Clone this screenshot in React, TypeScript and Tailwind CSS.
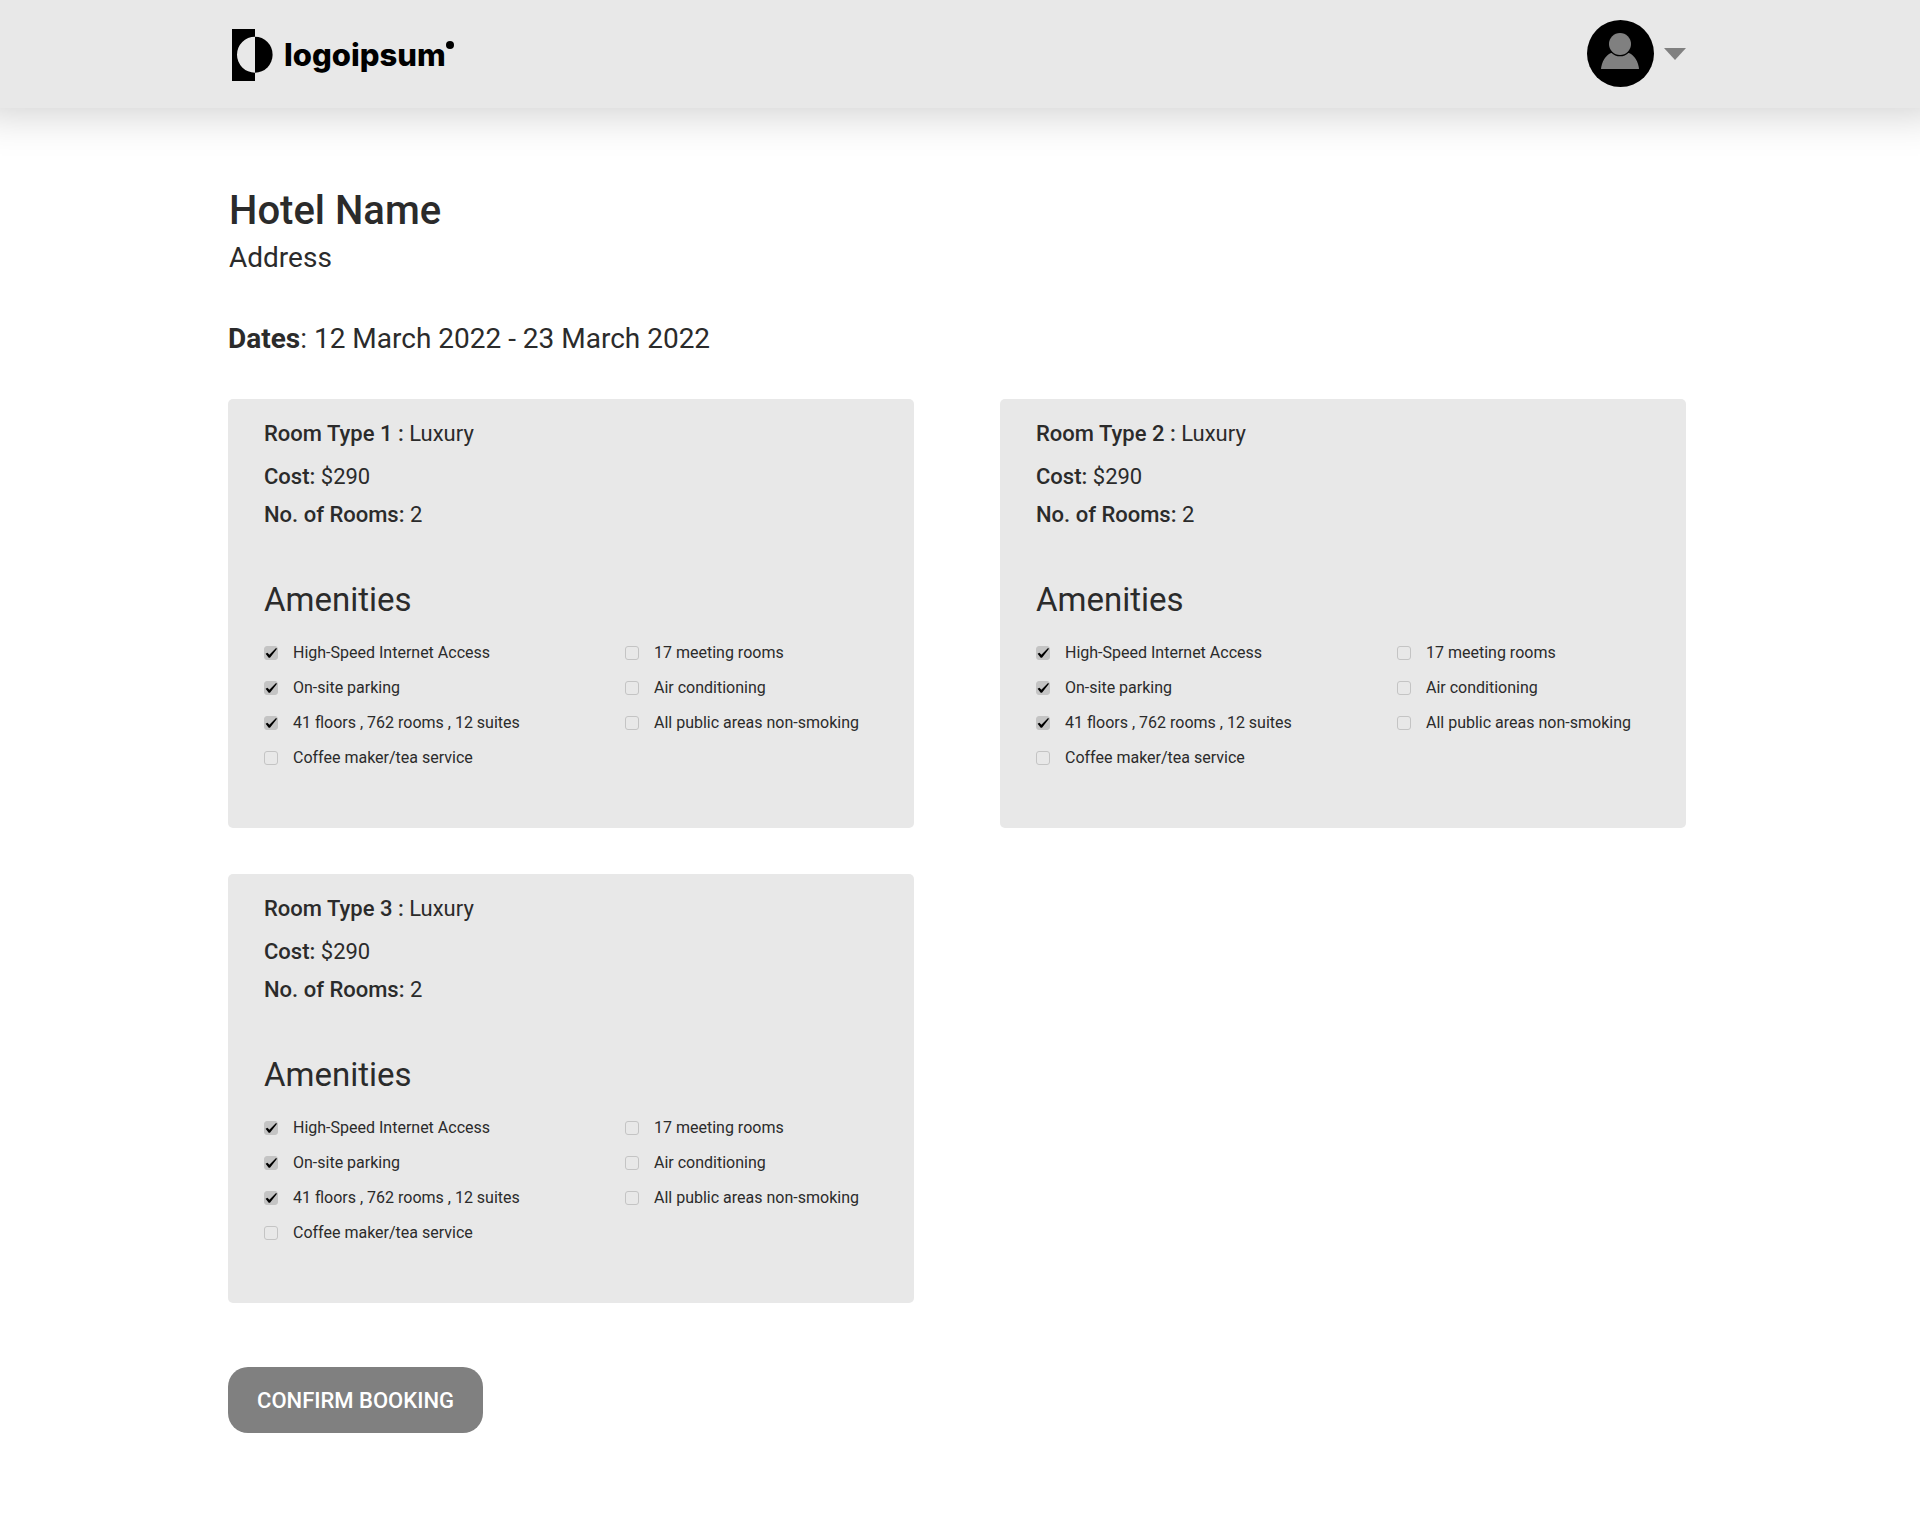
import { useState } from "react";

type Amenity = { label: string; included: boolean };
type Room = { id: number; type: string; cost: string; count: number };

const rooms: Room[] = [
  { id: 1, type: "Luxury", cost: "$290", count: 2 },
  { id: 2, type: "Luxury", cost: "$290", count: 2 },
  { id: 3, type: "Luxury", cost: "$290", count: 2 },
];

const amenityColumns: Amenity[][] = [
  [
    { label: "High-Speed Internet Access", included: true },
    { label: "On-site parking", included: true },
    { label: "41 floors , 762 rooms , 12 suites", included: true },
    { label: "Coffee maker/tea service", included: false },
  ],
  [
    { label: "17 meeting rooms", included: false },
    { label: "Air conditioning", included: false },
    { label: "All public areas non-smoking", included: false },
  ],
];

function Logo() {
  return (
    <a href="#" className="flex items-center pt-0.5 text-black">
      <svg width="41" height="52" viewBox="0 0 41 52" aria-hidden="true">
        <path d="M0 0H23V7.7A18 18 0 0 0 23 43.7V52H0Z" />
        <path d="M23 7.7A17.6 18 0 0 1 23 43.7Z" />
      </svg>
      <span className="ml-[11px] font-[Inter,sans-serif] text-[31px] leading-10 font-extrabold">logoipsum</span>
      <span className="mb-5 size-2 rounded-full bg-black" />
    </a>
  );
}

function AccountMenu() {
  return (
    <button type="button" aria-label="Account menu" className="flex cursor-pointer items-center gap-2.5 pb-0.5">
      <svg width="67" height="67" viewBox="0 0 67 67" aria-hidden="true">
        <circle cx="33.5" cy="33.5" r="33.5" fill="#000" />
        <path d="M14 49C14.500 42 18.500 35.500 24 33H42C47.500 35.500 51.500 42 52 49Z" fill="#808080" />
        <circle cx="33" cy="24" r="12.300" fill="#000" />
        <circle cx="33" cy="24" r="11" fill="#808080" />
      </svg>
      <svg className="mt-0.5" width="22" height="12" viewBox="0 0 22 12" aria-hidden="true">
        <path d="M0 0H22L11 12Z" fill="#808080" />
      </svg>
    </button>
  );
}

function AmenityOption({ label, included }: Amenity) {
  const [checked, setChecked] = useState(included);
  return (
    <li>
      <label className="flex h-[35px] items-center gap-[15px] text-base text-[#2b2b2b]">
        <span className="grid shrink-0">
          <input
            type="checkbox"
            checked={checked}
            onChange={() => setChecked(!checked)}
            className="col-start-1 row-start-1 size-3.5 appearance-none rounded-[3px] border border-[#c4c4c4] checked:bg-[#c4c4c4]"
          />
          {checked && (
            <svg
              className="pointer-events-none col-start-1 row-start-1"
              width="14"
              height="14"
              viewBox="0 0 14 14"
              aria-hidden="true"
            >
              <path d="M1.600 7.800L3.400 6.700L5.400 8.800L11.800 2.200L13.200 2.600L6 11.800H4.700Z" />
            </svg>
          )}
        </span>
        {label}
      </label>
    </li>
  );
}

function RoomCard({ room }: { room: Room }) {
  return (
    <article className="rounded-[5px] bg-[#e8e8e8] px-9 pt-[22px] pb-[53px]">
      <div className="text-[22px] leading-[26px]">
        <p>
          <span className="font-medium">Room Type {room.id} :</span> {room.type}
        </p>
        <p className="mt-[17px]">
          <span className="font-medium">Cost:</span> {room.cost}
        </p>
        <p className="mt-3">
          <span className="font-medium">No. of Rooms:</span> {room.count}
        </p>
      </div>
      <h2 className="mt-[53px] text-[33px] leading-[38px]">Amenities</h2>
      <div className="mt-4 grid sm:grid-cols-[361fr_253fr]">
        {amenityColumns.map((column, i) => (
          <ul key={i}>
            {column.map((amenity) => (
              <AmenityOption key={amenity.label} {...amenity} />
            ))}
          </ul>
        ))}
      </div>
    </article>
  );
}

export default function App() {
  return (
    <div className="min-h-screen overflow-x-clip bg-white font-[Roboto,sans-serif] text-[#2b2b2b]">
      <header className="bg-[#e8e8e8] px-6 shadow-[0_-18px_40px_24px_rgba(0,0,0,0.19)]">
        <div className="mx-auto flex h-[108px] max-w-[1464px] items-center justify-between pr-1.5 pl-1">
          <Logo />
          <AccountMenu />
        </div>
      </header>
      <main className="px-6 pt-[79px] pb-20">
        <div className="mx-auto max-w-[1464px] pr-1.5">
          <div className="pl-px">
            <h1 className="text-[40px] leading-[48px] font-medium">Hotel Name</h1>
            <p className="mt-1.5 text-[28px] leading-[34px]">Address</p>
          </div>
          <p className="mt-[47px] text-[28px] leading-[34px]">
            <span className="font-bold">Dates</span>: 12 March 2022 - 23 March 2022
          </p>
          <div className="mt-[43px] grid gap-x-[86px] gap-y-[46px] lg:grid-cols-2">
            {rooms.map((room) => (
              <RoomCard key={room.id} room={room} />
            ))}
          </div>
          <button
            type="button"
            className="mt-16 h-[66px] min-w-[255px] cursor-pointer rounded-[20px] bg-[#808080] px-6 text-[22px] font-medium text-white"
          >
            CONFIRM BOOKING
          </button>
        </div>
      </main>
    </div>
  );
}
